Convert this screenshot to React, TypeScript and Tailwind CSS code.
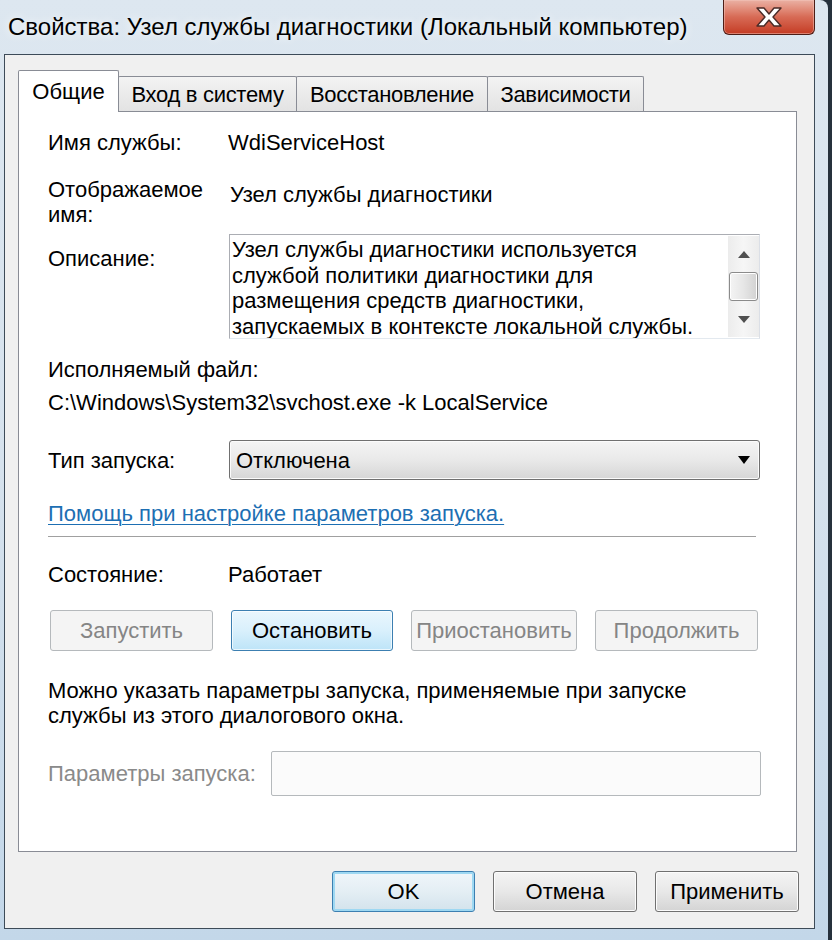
import * as React from "react";

/* Windows 7 service properties dialog */

const FONT = { fontFamily: '"Liberation Sans", Arial, sans-serif' };

function CloseGlyph() {
  return (
    <svg width="28" height="20" viewBox="0 0 28 20">
      <polygon
        points="2,1 9,1 14,7 19,1 26,1 18,10 26,19 19,19 14,13 9,19 2,19 10,10"
        fill="#ffffff"
        stroke="#4a2a26"
        strokeWidth="1.4"
        strokeLinejoin="round"
      />
    </svg>
  );
}

function Tab({ label, active, w }: { label: string; active?: boolean; w: string }) {
  return active ? (
    <div
      className={`${w} h-[42px] -mb-px relative z-10 bg-white border border-b-0 border-[#898c95] rounded-t-[2px] flex items-center justify-center text-[22px] text-black`}
    >
      {label}
    </div>
  ) : (
    <div
      className={`${w} h-[35px] -ml-px border border-b-0 border-[#898c95] rounded-t-[2px] bg-gradient-to-b from-[#f3f3f3] to-[#e3e3e3] flex items-center justify-center text-[22px] tracking-[-0.3px] text-black`}
    >
      {label}
    </div>
  );
}

type BtnKind = "normal" | "disabled" | "hot" | "default";

function Btn({ label, kind, w }: { label: string; kind: BtnKind; w: string }) {
  const base = `${w} h-[41px] rounded-[3px] border flex items-center justify-center text-[22px]`;
  if (kind === "disabled")
    return <div className={`${base} border-[#b5b9bc] bg-[#f4f4f4] text-[#858585]`}>{label}</div>;
  if (kind === "hot")
    return (
      <div className={`${base} border-[#3c7fb1] bg-gradient-to-b from-[#eaf6fd] via-[#d9f0fc] to-[#bde4f8] text-black shadow-[inset_0_0_0_1px_#ffffffb0]`}>
        {label}
      </div>
    );
  if (kind === "default")
    return (
      <div className={`${base} border-[#3c7fb1] bg-gradient-to-b from-[#f0f6fa] via-[#e4eef4] to-[#d3e3ec] text-black shadow-[inset_0_0_0_2px_#9ed8f2]`}>
        {label}
      </div>
    );
  return (
    <div className={`${base} border-[#707070] bg-gradient-to-b from-[#f4f4f4] via-[#e8e8e8] to-[#d4d4d4] text-black shadow-[inset_0_0_0_1px_#fcfcfc]`}>
      {label}
    </div>
  );
}

function ScrollArrow({ up }: { up?: boolean }) {
  return (
    <svg width="12" height="7" viewBox="0 0 12 7">
      {up ? <polygon points="6,0 12,7 0,7" fill="#505050" /> : <polygon points="0,0 12,0 6,7" fill="#505050" />}
    </svg>
  );
}

export default function App() {
  return (
    <div className="w-[832px] h-[940px] bg-[#26313c] overflow-hidden" style={FONT}>
      <div className="w-[828px] h-[940px] rounded-tr-[8px] bg-gradient-to-b from-[#dde7f0] via-[#d6e2ed] to-[#c3d7e9] flex flex-col">
        {/* title bar */}
        <div className="h-[54px] flex items-start justify-between">
          <div className="pl-[8px] pt-[12px] text-[24px] leading-[30px] text-black [text-shadow:0_0_10px_#ffffff]">
            Свойства: Узел службы диагностики (Локальный компьютер)
          </div>
          <div className="mr-[13px] w-[92px] h-[35px] rounded-b-[6px] border border-t-0 border-[#4d1d16] bg-gradient-to-b from-[#eab1a4] via-[#d76a55] to-[#c43a22] shadow-[inset_0_0_0_1px_#f3c7bd80] flex items-center justify-center">
            <CloseGlyph />
          </div>
        </div>

        {/* client area */}
        <div className="ml-[4px] mr-[13px] h-[875px] border border-[#3d4b58] bg-[#f0f0f0] pl-[13px] pt-[15px]">
          <div className="flex items-end h-[41px]">
            <Tab label="Общие" active w="w-[101px]" />
            <Tab label="Вход в систему" w="w-[179px]" />
            <Tab label="Восстановление" w="w-[192px]" />
            <Tab label="Зависимости" w="w-[157px]" />
          </div>

          <div className="w-[779px] h-[741px] bg-white border border-[#898c95] pl-[29px] text-[22px] leading-[25px] text-black">
            <div className="mt-[18px] flex">
              <div className="w-[180px]">Имя службы:</div>
              <div>WdiServiceHost</div>
            </div>

            <div className="mt-[22px] flex">
              <div className="w-[180px]">
                Отображаемое
                <br />
                имя:
              </div>
              <div className="pt-[5px] pl-[2px]">Узел службы диагностики</div>
            </div>

            <div className="mt-[7px] flex">
              <div className="w-[181px] pt-[12px]">Описание:</div>
              <div className="w-[531px] h-[105px] border border-[#abadb3] border-b-[#e3e9ef] border-r-[#dbdfe6] flex">
                <div className="flex-1 pl-[2px] pt-[2px] leading-[25.5px] whitespace-nowrap overflow-hidden">
                  Узел службы диагностики используется
                  <br />
                  службой политики диагностики для
                  <br />
                  размещения средств диагностики,
                  <br />
                  запускаемых в контексте локальной службы.
                </div>
                <div className="w-[31px] shrink-0 mt-px mb-px flex flex-col bg-gradient-to-r from-[#ececec] via-[#f6f6f6] to-[#ececec]">
                  <div className="h-[36px] flex items-center justify-center">
                    <ScrollArrow up />
                  </div>
                  <div className="h-[29px] mx-[1px] rounded-[3px] border border-[#8b8b8b] bg-gradient-to-r from-[#f4f4f4] via-[#e6e6e6] to-[#d2d2d2] shadow-[inset_0_0_0_1px_#ffffff]" />
                  <div className="flex-1 flex items-center justify-center">
                    <ScrollArrow />
                  </div>
                </div>
              </div>
            </div>

            <div className="mt-[18px]">Исполняемый файл:</div>
            <div className="mt-[8px]">C:\Windows\System32\svchost.exe -k LocalService</div>

            <div className="mt-[25px] flex items-center">
              <div className="w-[181px]">Тип запуска:</div>
              <div className="w-[531px] h-[40px] rounded-[3px] border border-[#707070] bg-gradient-to-b from-[#f4f4f4] via-[#e9e9e9] to-[#d6d6d6] shadow-[inset_0_0_0_1px_#fbfbfb] flex items-center justify-between pl-[6px] pr-[9px]">
                <span>Отключена</span>
                <svg width="12" height="8" viewBox="0 0 12 8">
                  <polygon points="0,0 12,0 6,8" fill="#000000" />
                </svg>
              </div>
            </div>

            <div className="mt-[21px]">
              <span className="text-[#1d6fb3] underline underline-offset-[3px] decoration-1">
                Помощь при настройке параметров запуска.
              </span>
            </div>

            <div className="mt-[10px] w-[708px] h-px bg-[#a0a0a0]" />

            <div className="mt-[25px] flex">
              <div className="w-[180px]">Состояние:</div>
              <div>Работает</div>
            </div>

            <div className="mt-[23px] pl-[2px] flex gap-[18px]">
              <Btn label="Запустить" kind="disabled" w="w-[163px]" />
              <Btn label="Остановить" kind="hot" w="w-[162px]" />
              <Btn label="Приостановить" kind="disabled" w="w-[166px]" />
              <Btn label="Продолжить" kind="disabled" w="w-[163px]" />
            </div>

            <div className="mt-[27px]">
              Можно указать параметры запуска, применяемые при запуске
              <br />
              службы из этого диалогового окна.
            </div>

            <div className="mt-[23px] flex items-center">
              <div className="w-[223px] text-[#8a8a8a]">Параметры запуска:</div>
              <div className="w-[490px] h-[45px] rounded-[2px] border border-[#b5b9bc] bg-[#fbfbfb]" />
            </div>
          </div>

          <div className="mt-[19px] pr-[15px] flex justify-end gap-[18px]">
            <Btn label="OK" kind="default" w="w-[143px]" />
            <Btn label="Отмена" kind="normal" w="w-[144px]" />
            <Btn label="Применить" kind="normal" w="w-[144px]" />
          </div>
        </div>
      </div>
    </div>
  );
}
